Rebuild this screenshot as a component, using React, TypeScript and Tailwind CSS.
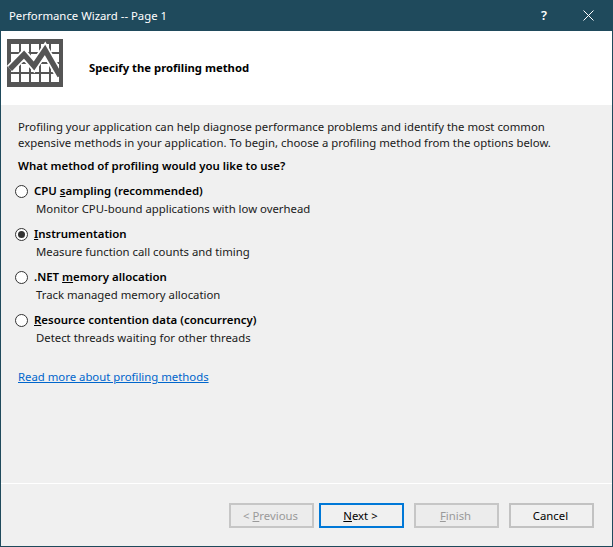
const font = { fontFamily: '"Noto Sans", "Open Sans", sans-serif' };

function ChartIcon() {
  return (
    <svg width="56" height="48" viewBox="0 0 56 48" className="shrink-0">
      <rect width="56" height="48" fill="#555555" />
      <g fill="#ffffff">
        {[4, 14, 24, 34, 44].map((x) => (
          <g key={x}>
            <rect x={x} y="5" width="8" height="8" />
            <rect x={x} y="15" width="8" height="8" />
            <rect x={x} y="25" width="8" height="8" />
            <rect x={x} y="35" width="8" height="8" />
          </g>
        ))}
      </g>
      <path d="M3 30 L17 15.5 L27 27 L38 11 L53 37" fill="none" stroke="#ffffff" strokeWidth="9" />
      <path d="M3 30 L17 15.5 L27 27 L38 11 L53 37" fill="none" stroke="#555555" strokeWidth="5.5" />
      <rect x="52" y="0" width="4" height="48" fill="#555555" />
    </svg>
  );
}

function Radio({ checked }: { checked?: boolean }) {
  return (
    <span className="-ml-[3px] flex size-[13px] shrink-0 items-center justify-center rounded-full border border-[#333333] bg-white">
      {checked && <span className="size-[7px] rounded-full bg-[#333333]" />}
    </span>
  );
}

function Option({
  before,
  mnemonic,
  after,
  hint,
  checked,
}: {
  before: string;
  mnemonic: string;
  after: string;
  hint: string;
  checked?: boolean;
}) {
  return (
    <div className="flex h-[35px] flex-col">
      <div className="flex h-[18px] items-center gap-[6px]">
        <Radio checked={checked} />
        <span className="text-[11.45px] leading-[18px] font-semibold text-black">
          {before}
          <span className="underline">{mnemonic}</span>
          {after}
        </span>
      </div>
      <div className="pl-[18px] text-[11.35px] leading-[17px] text-[#1a1a1a]">{hint}</div>
    </div>
  );
}

function WizardButton({
  before = "",
  mnemonic,
  after,
  disabled,
  primary,
}: {
  before?: string;
  mnemonic?: string;
  after: string;
  disabled?: boolean;
  primary?: boolean;
}) {
  const tone = primary
    ? "border-2 border-[#0078d7] bg-[#f0f0f0] text-black"
    : disabled
      ? "border-2 border-[#c6c6c6] bg-[#ececec] text-[#9a9a9a]"
      : "border-2 border-[#c2c2c2] bg-[#f0f0f0] text-black";
  return (
    <button className={`h-[25px] w-[85px] pr-[2px] text-[11.35px] leading-[20px] ${tone}`} style={font}>
      {before}
      {mnemonic && <span className="underline">{mnemonic}</span>}
      {after}
    </button>
  );
}

export default function App() {
  return (
    <div
      className="flex h-[547px] w-[613px] flex-col overflow-hidden border-x border-b border-[#1f4a5c] bg-[#f0f0f0]"
      style={font}
    >
      <div className="-mx-px flex h-[31px] shrink-0 items-center justify-between bg-[#1f4a5c] pr-[19px] pl-[9px] text-[11.35px] text-white">
        <span>Performance Wizard -- Page 1</span>
        <div className="flex items-center gap-[36px]">
          <span className="text-[13px] font-semibold">?</span>
          <svg width="11" height="11" viewBox="0 0 11 11">
            <path d="M0.5 0.5 L10.5 10.5 M10.5 0.5 L0.5 10.5" stroke="#ffffff" strokeWidth="1" fill="none" />
          </svg>
        </div>
      </div>
      <div className="flex h-[74px] shrink-0 items-center bg-white pl-[6px]">
        <div className="-mt-[10px]">
          <ChartIcon />
        </div>
        <div className="pl-[26px] text-[11.3px] font-bold text-black">Specify the profiling method</div>
      </div>
      <div className="flex flex-1 flex-col px-[17px] pt-[14px]">
        <p className="text-[11.35px] leading-[16px] text-[#1a1a1a]">
          Profiling your application can help diagnose performance problems and identify the most common
          <br />
          expensive methods in your application. To begin, choose a profiling method from the options below.
        </p>
        <p className="mt-[6px] text-[11.45px] leading-[18px] font-semibold text-black">
          What method of profiling would you like to use?
        </p>
        <div className="mt-[7px] flex flex-col gap-2">
          <Option before="CPU " mnemonic="s" after="ampling (recommended)" hint="Monitor CPU-bound applications with low overhead" />
          <Option before="" mnemonic="I" after="nstrumentation" hint="Measure function call counts and timing" checked />
          <Option before=".NET " mnemonic="m" after="emory allocation" hint="Track managed memory allocation" />
          <Option before="" mnemonic="R" after="esource contention data (concurrency)" hint="Detect threads waiting for other threads" />
        </div>
        <a className="mt-[22px] text-[11.35px] leading-[18px] text-[#0066cc] underline">Read more about profiling methods</a>
      </div>
      <div className="h-px shrink-0 bg-white" />
      <div className="flex h-[62px] shrink-0 items-start justify-end gap-[5px] pt-[19px] pr-[18px]">
        <WizardButton before="< " mnemonic="P" after="revious" disabled />
        <WizardButton mnemonic="N" after="ext >" primary />
        <div className="ml-[5px] flex gap-[10px]">
          <WizardButton mnemonic="F" after="inish" disabled />
          <WizardButton after="Cancel" />
        </div>
      </div>
    </div>
  );
}
